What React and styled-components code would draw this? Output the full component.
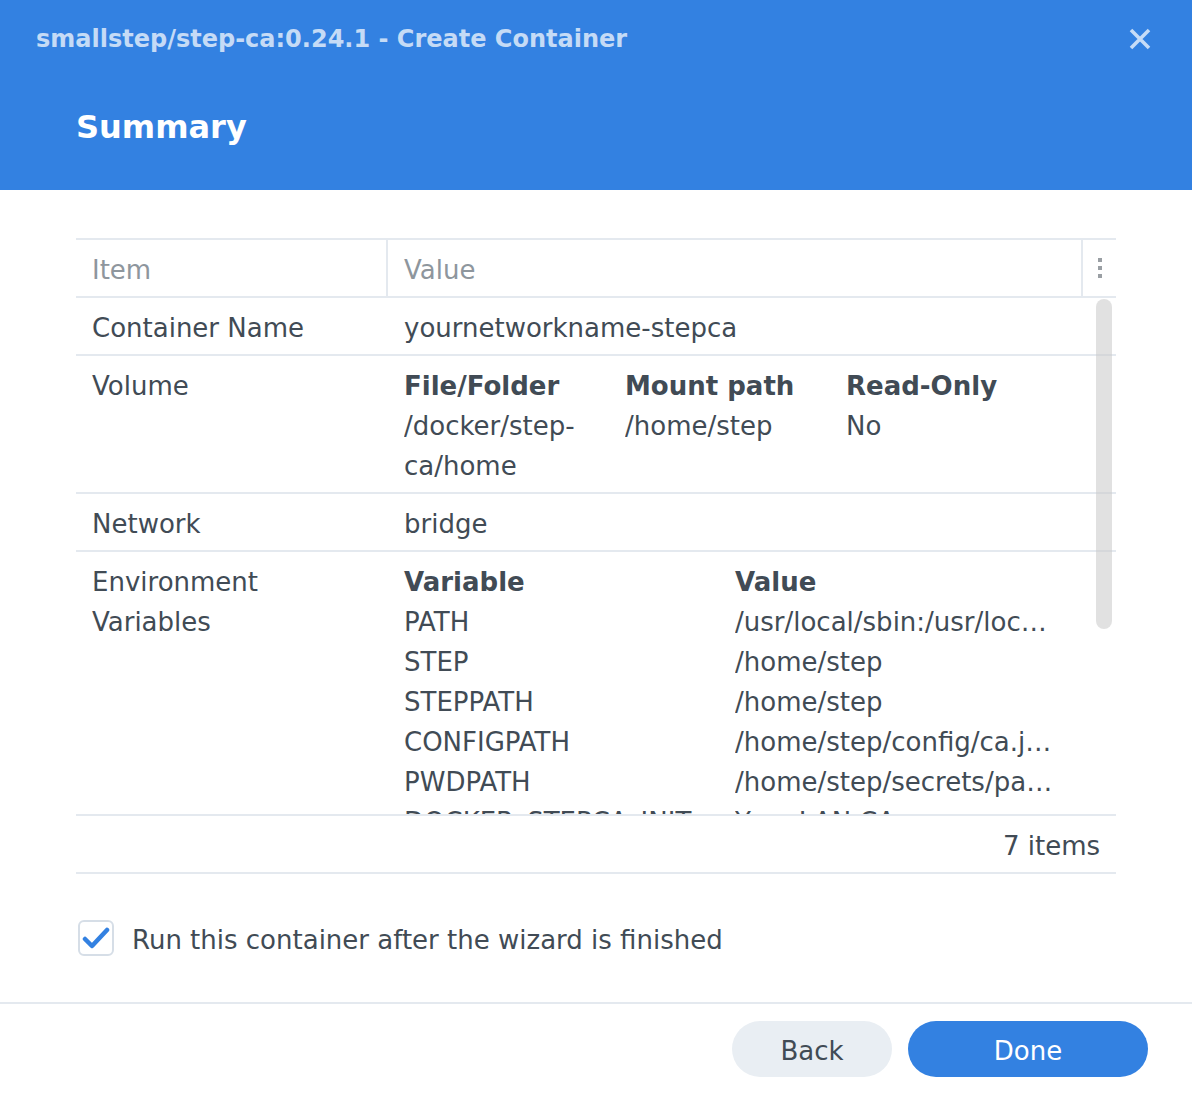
import React from "react";
import styled, { createGlobalStyle } from "styled-components";

const GlobalStyle = createGlobalStyle`
  html, body { margin: 0; padding: 0; background: #ffffff; }
  body { font-family: "DejaVu Sans", "Liberation Sans", sans-serif; color: #414b55; }
  * { box-sizing: border-box; }
`;

const Dialog = styled.div`
  width: 1192px;
  height: 1094px;
  display: flex;
  flex-direction: column;
  background: #fff;
  overflow: hidden;
`;

const Header = styled.header`
  background: #3381e1;
  height: 190px;
  display: flex;
  flex-direction: column;
`;

const TitleRow = styled.div`
  height: 76px;
  display: flex;
  align-items: center;
  justify-content: space-between;
  padding: 2px 40px 0 36px;
`;

const Title = styled.div`
  font-size: 24px;
  font-weight: bold;
  color: rgba(255, 255, 255, 0.72);
`;

const CloseButton = styled.button`
  width: 24px;
  height: 24px;
  padding: 0;
  border: none;
  background: transparent;
  display: flex;
  align-items: center;
  justify-content: center;
  color: rgba(255, 255, 255, 0.72);
`;

const Heading = styled.h1`
  margin: 0;
  height: 102px;
  line-height: 102px;
  padding-left: 76px;
  font-size: 32px;
  font-weight: bold;
  color: #ffffff;
`;

const Body = styled.main`
  flex: 1;
  padding: 48px 76px 0;
  display: flex;
  flex-direction: column;
`;

const Table = styled.div`
  border-top: 2px solid #e4e9ef;
  border-bottom: 2px solid #e4e9ef;
  display: flex;
  flex-direction: column;
`;

const HeadRow = styled.div`
  display: grid;
  grid-template-columns: 312px 1fr 33px;
  height: 58px;
  border-bottom: 2px solid #e4e9ef;
`;

const HeadCell = styled.div`
  display: flex;
  align-items: center;
  padding: 4px 0 0 16px;
  font-size: 26px;
  color: #8e969d;
  border-right: ${(p) => (p.$divider ? "2px solid #e4e9ef" : "none")};
`;

const MenuCell = styled.div`
  display: flex;
  flex-direction: column;
  align-items: center;
  justify-content: center;
  gap: 4px;
`;

const Dot = styled.span`
  width: 4px;
  height: 4px;
  background: #9a9fa4;
`;

const ScrollArea = styled.div`
  position: relative;
  height: 516px;
  overflow: hidden;
`;

const Scrollbar = styled.div`
  position: absolute;
  top: 1px;
  right: 4px;
  width: 16px;
  height: 330px;
  border-radius: 8px;
  background: rgba(200, 200, 200, 0.55);
`;

const Row = styled.div`
  display: grid;
  grid-template-columns: 312px 1fr;
  border-bottom: 2px solid #e4e9ef;
  padding: 10px 0 6px;
  font-size: 26px;
  line-height: 40px;
  color: #414b55;
`;

const ItemCell = styled.div`
  padding: 0 16px;
`;

const ValueCell = styled.div`
  padding: 0 50px 0 16px;
  min-width: 0;
`;

const SubGrid = styled.div`
  display: grid;
  grid-template-columns: ${(p) => p.$cols};
`;

const SubHead = styled.div`
  font-weight: bold;
`;

const SubCell = styled.div`
  min-width: 0;
  padding-right: ${(p) => (p.$nowrap ? "8px" : "12px")};
  white-space: ${(p) => (p.$nowrap ? "nowrap" : "normal")};
  overflow: hidden;
  text-overflow: ellipsis;
`;

const FootRow = styled.div`
  height: 58px;
  border-top: 2px solid #e4e9ef;
  display: flex;
  align-items: center;
  justify-content: flex-end;
  padding: 4px 16px 0 0;
  font-size: 26px;
  color: #414b55;
`;

const CheckLine = styled.label`
  margin-top: 46px;
  display: flex;
  align-items: center;
  gap: 18px;
  padding-left: 2px;
  font-size: 26px;
  color: #414b55;
`;

const CheckText = styled.span`
  padding-top: 4px;
`;

const CheckBox = styled.span`
  width: 36px;
  height: 36px;
  border: 2px solid #d6dee7;
  border-radius: 6px;
  display: flex;
  align-items: center;
  justify-content: center;
  background: #fff;
`;

const Footer = styled.footer`
  height: 92px;
  border-top: 2px solid #e4e9ef;
  display: flex;
  align-items: center;
  justify-content: flex-end;
  gap: 16px;
  padding: 0 44px 0 0;
`;

const Button = styled.button`
  height: 56px;
  width: ${(p) => p.$w}px;
  border: none;
  border-radius: 28px;
  padding-top: 4px;
  font-family: "DejaVu Sans", "Liberation Sans", sans-serif;
  font-size: 26px;
  background: ${(p) => (p.$primary ? "#3381e1" : "#e9eef3")};
  color: ${(p) => (p.$primary ? "#ffffff" : "#414b55")};
`;

const envVars = [
  ["PATH", "/usr/local/sbin:/usr/local/bin:/usr/sbin:/usr/bin:/sbin:/bin"],
  ["STEP", "/home/step"],
  ["STEPPATH", "/home/step"],
  ["CONFIGPATH", "/home/step/config/ca.json"],
  ["PWDPATH", "/home/step/secrets/password"],
  ["DOCKER_STEPCA_INIT_NAME", "Your LAN CA"],
  ["DOCKER_STEPCA_INIT_DNS_NAMES", "localhost"],
];

export default function App() {
  return (
    <>
      <GlobalStyle />
      <Dialog>
        <Header>
          <TitleRow>
            <Title>smallstep/step-ca:0.24.1 - Create Container</Title>
            <CloseButton aria-label="Close">
              <svg width="22" height="22" viewBox="0 0 22 22">
                <path d="M2 2 L20 20 M20 2 L2 20" stroke="currentColor" strokeWidth="3.6" strokeLinecap="butt" />
              </svg>
            </CloseButton>
          </TitleRow>
          <Heading>Summary</Heading>
        </Header>
        <Body>
          <Table>
            <HeadRow>
              <HeadCell $divider>Item</HeadCell>
              <HeadCell $divider>Value</HeadCell>
              <MenuCell>
                <Dot />
                <Dot />
                <Dot />
              </MenuCell>
            </HeadRow>
            <ScrollArea>
              <Row>
                <ItemCell>Container Name</ItemCell>
                <ValueCell>yournetworkname-stepca</ValueCell>
              </Row>
              <Row>
                <ItemCell>Volume</ItemCell>
                <ValueCell>
                  <SubGrid $cols="221px 221px 221px">
                    <SubHead>File/Folder</SubHead>
                    <SubHead>Mount path</SubHead>
                    <SubHead>Read-Only</SubHead>
                    <SubCell>/docker/step-ca/home</SubCell>
                    <SubCell>/home/step</SubCell>
                    <SubCell>No</SubCell>
                  </SubGrid>
                </ValueCell>
              </Row>
              <Row>
                <ItemCell>Network</ItemCell>
                <ValueCell>bridge</ValueCell>
              </Row>
              <Row>
                <ItemCell>Environment Variables</ItemCell>
                <ValueCell>
                  <SubGrid $cols="331px 331px">
                    <SubHead>Variable</SubHead>
                    <SubHead>Value</SubHead>
                    {envVars.map(([k, v]) => (
                      <React.Fragment key={k}>
                        <SubCell $nowrap>{k}</SubCell>
                        <SubCell $nowrap>{v}</SubCell>
                      </React.Fragment>
                    ))}
                  </SubGrid>
                </ValueCell>
              </Row>
              <Row>
                <ItemCell>Port Settings</ItemCell>
                <ValueCell>9000 → 9000 (TCP)</ValueCell>
              </Row>
              <Scrollbar />
            </ScrollArea>
            <FootRow>7 items</FootRow>
          </Table>
          <CheckLine>
            <CheckBox>
              <svg width="28" height="24" viewBox="0 0 28 24">
                <path d="M3 13 L10 20 L25 4" fill="none" stroke="#3381e1" strokeWidth="4.5" strokeLinecap="round" strokeLinejoin="round" />
              </svg>
            </CheckBox>
            <CheckText>Run this container after the wizard is finished</CheckText>
          </CheckLine>
        </Body>
        <Footer>
          <Button $w={160}>Back</Button>
          <Button $w={240} $primary>Done</Button>
        </Footer>
      </Dialog>
    </>
  );
}
